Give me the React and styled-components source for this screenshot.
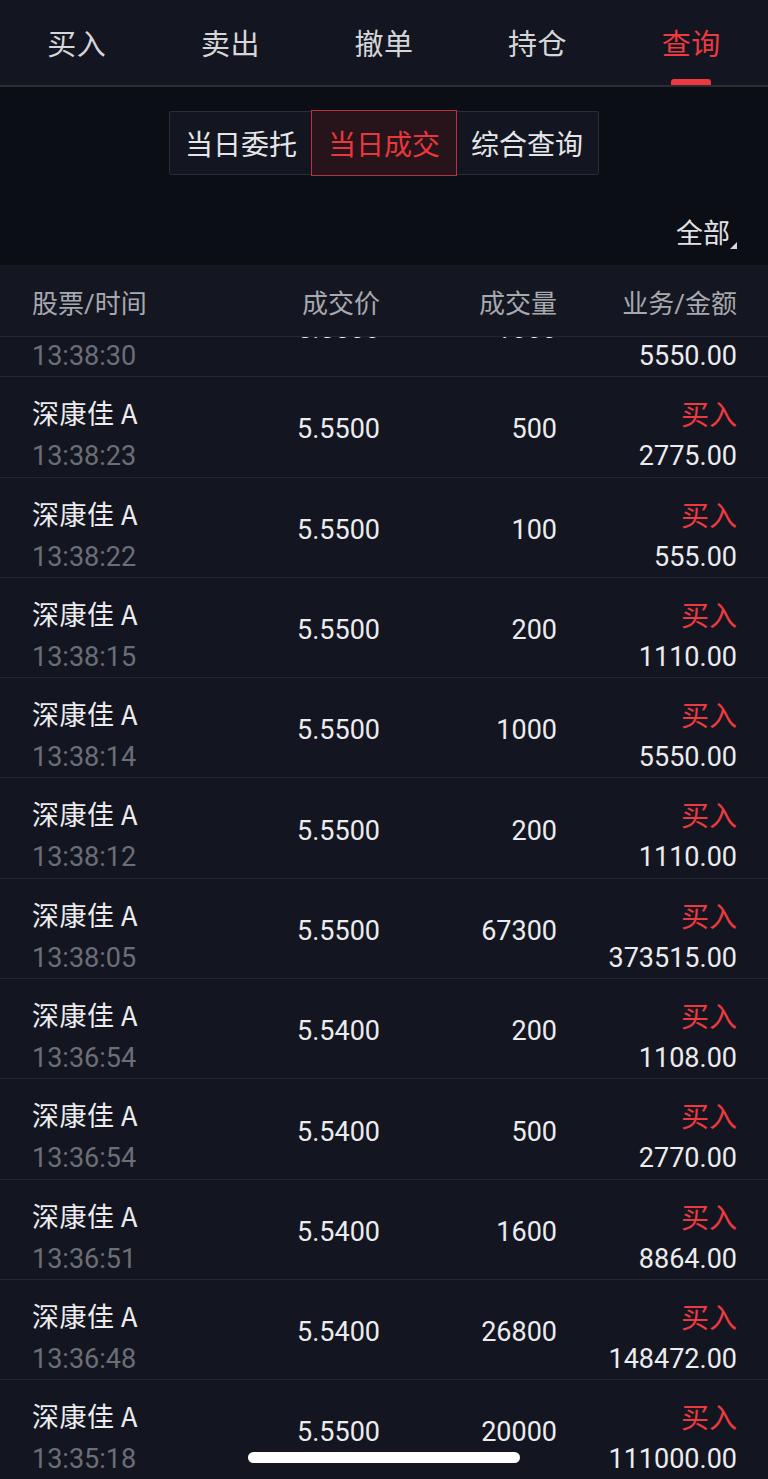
import React from "react";
import styled, { createGlobalStyle } from "styled-components";

const Global = createGlobalStyle`
  html, body { margin: 0; padding: 0; background: #131620; }
  body { font-family: Roboto, "Noto Sans CJK SC", sans-serif; -webkit-font-smoothing: antialiased; }
  * { box-sizing: border-box; }
`;

const Page = styled.div`
  width: 768px;
  height: 1479px;
  overflow: hidden;
  position: relative;
  background: #131620;
  display: flex;
  flex-direction: column;
`;

const TabBar = styled.div`
  height: 87px;
  flex: none;
  display: grid;
  grid-template-columns: repeat(5, 1fr);
  background: #131620;
  border-bottom: 2px solid #2a2d37;
`;

const Tab = styled.div`
  position: relative;
  display: flex;
  align-items: center;
  justify-content: center;
  padding-bottom: 2px;
  font-family: "Noto Sans CJK SC", sans-serif;
  font-size: 29px;
  letter-spacing: 0.5px;
  color: ${(p) => (p.$active ? "#ec3a40" : "#d6d6da")};
  &::after {
    content: "";
    display: ${(p) => (p.$active ? "block" : "none")};
    position: absolute;
    bottom: 0;
    left: 50%;
    width: 40px;
    margin-left: -20px;
    height: 6px;
    border-radius: 3px 3px 0 0;
    background: #ec3a40;
  }
`;

const FilterArea = styled.div`
  height: 178px;
  flex: none;
  background: #0c0e16;
  display: flex;
  flex-direction: column;
  align-items: center;
  padding-top: 24px;
`;

const Segments = styled.div`
  display: flex;
  height: 64px;
  border: 1px solid #2a2e38;
  border-radius: 2px;
  background: #131620;
`;

const Segment = styled.div`
  width: ${(p) => p.$w}px;
  display: flex;
  align-items: center;
  justify-content: center;
  font-family: "Noto Sans CJK SC", sans-serif;
  font-size: 28px;
  color: ${(p) => (p.$active ? "#e8373d" : "#e6e6ea")};
  background: ${(p) => (p.$active ? "#26141a" : "transparent")};
  outline: ${(p) => (p.$active ? "1px solid #b5343a" : "none")};
  margin: ${(p) => (p.$active ? "-1px 0" : "0")};
  position: relative;
`;

const FilterRow = styled.div`
  align-self: stretch;
  display: flex;
  justify-content: flex-end;
  align-items: flex-end;
  padding: 0 31px 0 0;
  margin-top: 40px;
`;

const FilterLabel = styled.span`
  font-family: "Noto Sans CJK SC", sans-serif;
  font-size: 27px;
  line-height: 34px;
  color: #e2e2e6;
`;

const Caret = styled.span`
  width: 0;
  height: 0;
  border-left: 7px solid transparent;
  border-bottom: 7px solid #d8d8dc;
  margin-bottom: 0;
`;

const Columns = styled.div`
  display: grid;
  grid-template-columns: 218px 130px 177px 180px;
  padding: 0 31px 0 32px;
`;

const Header = styled(Columns)`
  height: 72px;
  flex: none;
  align-items: center;
  background: #141722;
  border-bottom: 1px solid #23262f;
  font-family: Roboto, "Noto Sans CJK SC", sans-serif;
  font-size: 26px;
  color: #a8a9ae;
`;

const HeadCell = styled.div`
  text-align: ${(p) => (p.$left ? "left" : "right")};
  padding-top: 2px;
`;

const Viewport = styled.div`
  flex: 1;
  overflow: hidden;
`;

const List = styled.div`
  margin-top: -60px;
`;

const Row = styled(Columns)`
  height: 100.3px;
  border-bottom: 1px solid #23262f;
  background: #131620;
`;

const Stack = styled.div`
  display: flex;
  flex-direction: column;
  align-items: ${(p) => (p.$right ? "flex-end" : "flex-start")};
  padding-top: 18px;
`;

const Name = styled.div`
  font-family: "Noto Sans CJK SC", sans-serif;
  font-size: 27px;
  line-height: 36px;
  color: #ececef;
  letter-spacing: 0.5px;
`;

const Side = styled(Name)`
  color: #ec3a40;
  font-size: 28px;
  letter-spacing: 0;
`;

const Time = styled.div`
  font-family: Roboto, sans-serif;
  font-size: 27px;
  line-height: 36px;
  margin-top: 7px;
  color: #6c6e76;
`;

const Amount = styled(Time)`
  color: #ececef;
`;

const Num = styled.div`
  font-family: Roboto, sans-serif;
  font-size: 27px;
  color: #ececef;
  text-align: right;
  align-self: center;
  padding-top: 5px;
`;

const HomeIndicator = styled.div`
  position: absolute;
  left: 248px;
  bottom: 16px;
  width: 272px;
  height: 11px;
  border-radius: 6px;
  background: #ffffff;
`;

const tabs = ["买入", "卖出", "撤单", "持仓", "查询"];
const rows = [
  ["13:38:30", "5.5500", "1000", "5550.00"],
  ["13:38:23", "5.5500", "500", "2775.00"],
  ["13:38:22", "5.5500", "100", "555.00"],
  ["13:38:15", "5.5500", "200", "1110.00"],
  ["13:38:14", "5.5500", "1000", "5550.00"],
  ["13:38:12", "5.5500", "200", "1110.00"],
  ["13:38:05", "5.5500", "67300", "373515.00"],
  ["13:36:54", "5.5400", "200", "1108.00"],
  ["13:36:54", "5.5400", "500", "2770.00"],
  ["13:36:51", "5.5400", "1600", "8864.00"],
  ["13:36:48", "5.5400", "26800", "148472.00"],
  ["13:35:18", "5.5500", "20000", "111000.00"],
];

export default function App() {
  return (
    <Page>
      <Global />
      <TabBar>
        {tabs.map((t) => (
          <Tab key={t} $active={t === "查询"}>{t}</Tab>
        ))}
      </TabBar>
      <FilterArea>
        <Segments>
          <Segment $w={142}>当日委托</Segment>
          <Segment $w={144} $active>当日成交</Segment>
          <Segment $w={142}>综合查询</Segment>
        </Segments>
        <FilterRow>
          <FilterLabel>全部</FilterLabel>
          <Caret />
        </FilterRow>
      </FilterArea>
      <Header>
        <HeadCell $left>股票/时间</HeadCell>
        <HeadCell>成交价</HeadCell>
        <HeadCell>成交量</HeadCell>
        <HeadCell>业务/金额</HeadCell>
      </Header>
      <Viewport>
        <List>
          {rows.map((r, i) => (
            <Row key={i}>
              <Stack>
                <Name>深康佳 A</Name>
                <Time>{r[0]}</Time>
              </Stack>
              <Num>{r[1]}</Num>
              <Num>{r[2]}</Num>
              <Stack $right>
                <Side>买入</Side>
                <Amount>{r[3]}</Amount>
              </Stack>
            </Row>
          ))}
        </List>
      </Viewport>
      <HomeIndicator />
    </Page>
  );
}
